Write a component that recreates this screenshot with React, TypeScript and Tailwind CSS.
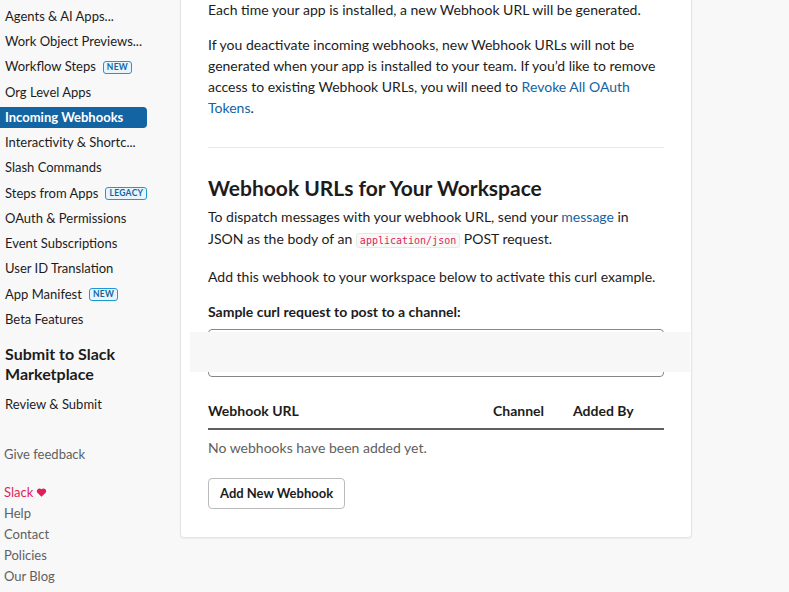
const navItems: { label: string; badge?: string; active?: boolean }[] = [
  { label: "Agents & AI Apps..." },
  { label: "Work Object Previews..." },
  { label: "Workflow Steps", badge: "NEW" },
  { label: "Org Level Apps" },
  { label: "Incoming Webhooks", active: true },
  { label: "Interactivity & Shortc..." },
  { label: "Slash Commands" },
  { label: "Steps from Apps", badge: "LEGACY" },
  { label: "OAuth & Permissions" },
  { label: "Event Subscriptions" },
  { label: "User ID Translation" },
  { label: "App Manifest", badge: "NEW" },
  { label: "Beta Features" },
];

const footerLinks = ["Help", "Contact", "Policies", "Our Blog"];

const Badge = ({ text }: { text: string }) => (
  <span className="ml-[7px] inline-flex h-[13px] items-center rounded-[3px] border border-[#1d9bd1] bg-[#e8f5fa] px-[3px] text-[8.5px] font-bold leading-none tracking-[0.3px] text-[#1264a3]">
    {text}
  </span>
);

const Sidebar = () => (
  <aside className="w-[147px] shrink-0 pt-[6px] text-[13px] text-[#1d1c1d]">
    <nav className="flex flex-col gap-[4.25px]">
      {navItems.map((item) => (
        <a
          key={item.label}
          className={
            item.active
              ? "flex h-[21px] items-center whitespace-nowrap rounded-r-[4px] bg-[#1264a3] pl-[5px] font-bold text-white"
              : "flex h-[21px] items-center whitespace-nowrap pl-[5px]"
          }
        >
          {item.label}
          {item.badge && <Badge text={item.badge} />}
        </a>
      ))}
    </nav>

    <h3 className="mt-[14px] pl-[5px] text-[16px] font-bold leading-[20px]">
      Submit to Slack
      <br />
      Marketplace
    </h3>
    <a className="mt-[10px] block pl-[5px] leading-[21px]">Review &amp; Submit</a>

    <a className="mt-[29px] block pl-[4px] leading-[21px] text-[#616061]">
      Give feedback
    </a>

    <ul className="mt-[17px] pl-[4px] leading-[21px] text-[#616061]">
      <li className="flex items-center text-[#e01e5a]">
        Slack
        <svg viewBox="0 0 24 24" className="ml-[3px] h-[11px] w-[11px] fill-[#e01e5a]">
          <path d="M12 21.5 3.6 13.3C1.2 10.9 1.2 7 3.6 4.7c2.3-2.3 5.9-2.2 8.4.4 2.5-2.6 6.1-2.7 8.4-.4 2.4 2.3 2.4 6.2 0 8.6z" />
        </svg>
      </li>
      {footerLinks.map((link) => (
        <li key={link}>{link}</li>
      ))}
    </ul>
  </aside>
);

const App = () => {
  return (
    <div className="flex min-h-[592px] gap-[33px] overflow-hidden bg-[#f8f8f8] font-['Lato',sans-serif] text-[#1d1c1d]">
      <Sidebar />

      <main className="w-[512px] shrink-0">
        <section className="-mt-3 rounded-[4px] border border-[#e4e4e4] bg-white px-[27px] pt-[10px] pb-[28px] text-[14px] leading-[21px] shadow-[0_1px_2px_rgba(0,0,0,0.05)]">
          <p>Each time your app is installed, a new Webhook URL will be generated.</p>
          <p className="mt-[14px]">
            If you deactivate incoming webhooks, new Webhook URLs will not be
            generated when your app is installed to your team. If you’d like to
            remove access to existing Webhook URLs, you will need to{" "}
            <a className="text-[#1264a3]">Revoke All OAuth Tokens</a>.
          </p>

          <hr className="mt-[29px] border-[#e8e8e8]" />

          <h2 className="mt-[26px] text-[21px] font-bold leading-[28px]">
            Webhook URLs for Your Workspace
          </h2>
          <p className="mt-[4px] leading-[22px]">
            To dispatch messages with your webhook URL, send your{" "}
            <a className="text-[#1264a3]">message</a> in JSON as the body of an{" "}
            <code className="rounded-[3px] border border-[#e8e8e8] bg-[#f8f8f8] px-[3px] py-[1px] font-['DejaVu_Sans_Mono',monospace] text-[10px] text-[#e01e5a]">
              application/json
            </code>{" "}
            POST request.
          </p>
          <p className="mt-[14px]">
            Add this webhook to your workspace below to activate this curl example.
          </p>

          <h4 className="mt-[14px] font-bold">Sample curl request to post to a channel:</h4>
          <div className="relative mt-[7px] h-[48px] rounded-[4px] border border-[#868686]">
            <div className="absolute -left-[19px] -right-[27px] top-[2px] bottom-[4px] bg-[#f7f7f7]" />
          </div>

          <div className="mt-[23px] flex border-b-2 border-[#616061] pb-[7px] font-bold">
            <span className="flex-1">Webhook URL</span>
            <span className="w-[80px]">Channel</span>
            <span className="w-[91px]">Added By</span>
          </div>
          <p className="mt-[7px] text-[#616061]">No webhooks have been added yet.</p>

          <button className="mt-[20px] h-[31px] rounded-[4px] border border-[#bbbbbb] bg-white px-[11px] text-[13px] font-bold text-[#1d1c1d]">
            Add New Webhook
          </button>
        </section>
      </main>
    </div>
  );
};

export default App;
